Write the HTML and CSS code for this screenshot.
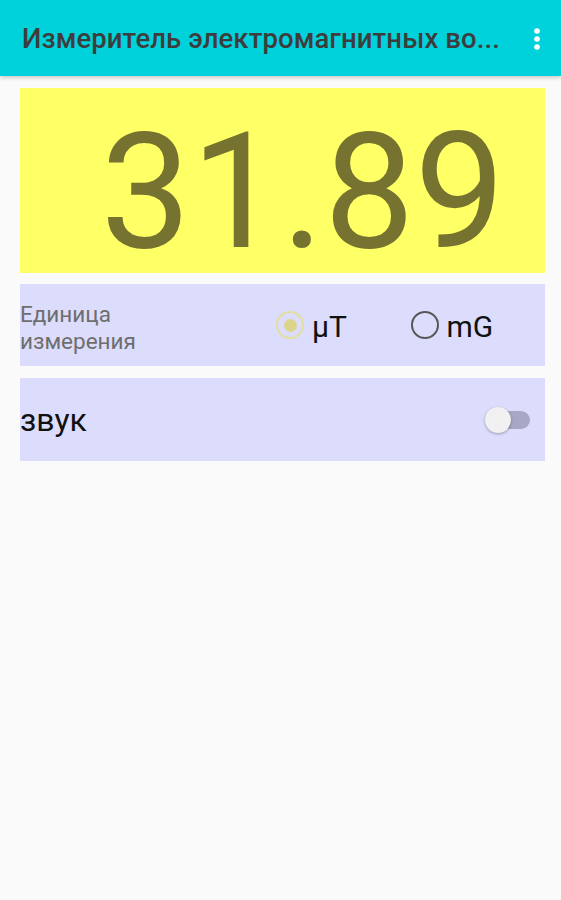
FILE: index.html
```html
<!DOCTYPE html>
<html lang="ru">
	<head>
		<title>Измеритель электромагнитных волн</title>
		<meta charset="utf-8">
		<meta name="viewport" content="width=device-width, initial-scale=1">
		<link rel="stylesheet" href="styles.css">
	</head>
	<body>
		<div id="appbar">
			<h1 class="title">Измеритель электромагнитных во...</h1>
			<div class="menuBtn">
				<svg width="8" height="24" viewBox="0 0 8 24">
					<circle cx="4" cy="4" r="2.8" fill="#fff"/>
					<circle cx="4" cy="12" r="2.8" fill="#fff"/>
					<circle cx="4" cy="20" r="2.8" fill="#fff"/>
				</svg>
			</div>
		</div>

		<div id="content">
			<div class="reading">31.89</div>

			<div class="panel unitRow">
				<div class="unitLabel">Единица<br>измерения</div>
				<div class="radio">
					<span class="radioMark on"></span>
					<span class="radioText">μT</span>
				</div>
				<div class="radio">
					<span class="radioMark"></span>
					<span class="radioText">mG</span>
				</div>
			</div>

			<div class="panel soundRow">
				<span class="soundLabel">звук</span>
				<span class="switch"><span class="thumb"></span></span>
			</div>
		</div>
	</body>
</html>
```

FILE: styles.css
```css
/*
 * RESET
 */
* { margin: 0; padding: 0; box-sizing: border-box; }
html, body { height: 100%; }
body {
	font-family: Roboto, "Noto Sans", sans-serif;
	background: #fafafa;
}

/*
 * APP BAR
 */
#appbar {
	height: 76px;
	display: flex; align-items: center;
	padding: 0 20px 0 22px;
	background: #00d2dc;
	box-shadow: 0 2px 4px rgba(0,0,0,0.18);
}
.title {
	flex: 1; min-width: 0;
	font-size: 27.5px; font-weight: 500;
	letter-spacing: 0.1px;
	color: #3d3d3d;
	white-space: nowrap; overflow: hidden;
}
.menuBtn { display: flex; padding-top: 2px; }
.menuBtn svg { display: block; }

/*
 * CONTENT
 */
#content {
	padding: 12px 16px 0 20px;
	display: flex; flex-direction: column; gap: 11px;
}
.reading {
	height: 185px;
	padding: 24px 40px 0 0;
	background: #ffff66;
	color: #767230;
	font-size: 161px; line-height: 1;
	text-align: right;
}
.panel {
	background: #dcdcfc;
	display: flex; align-items: center;
}
.unitRow { height: 82px; }
.soundRow { height: 83px; margin-top: 1px; padding-right: 15px; }

.unitLabel {
	width: 256px; flex-shrink: 0;
	padding-top: 6px;
	font-size: 22.5px; line-height: 27px;
	color: #6e6e6e;
}
.radio {
	width: 139px;
	display: flex; align-items: center; gap: 8px;
}
.radioMark {
	flex-shrink: 0;
	width: 28px; height: 28px;
	border: 2px solid #575757; border-radius: 50%;
	display: flex; align-items: center; justify-content: center;
}
.radioMark.on { border: 2.5px solid #e3df9e; }
.radioMark.on::after {
	content: ""; width: 13px; height: 13px;
	border-radius: 50%; background: #dcd589;
}
.radioText { font-size: 30px; color: #111; padding-top: 2px; }

.soundLabel { flex: 1; font-size: 32px; color: #111; }
.switch {
	position: relative;
	width: 44px; height: 18px;
	border-radius: 9px;
	background: #a8a8c6;
}
.thumb {
	position: absolute; left: -1px; top: -4px;
	width: 26px; height: 26px; border-radius: 50%;
	background: #f1f1f1;
	box-shadow: 0 1px 3px rgba(0,0,0,0.3);
}
```
